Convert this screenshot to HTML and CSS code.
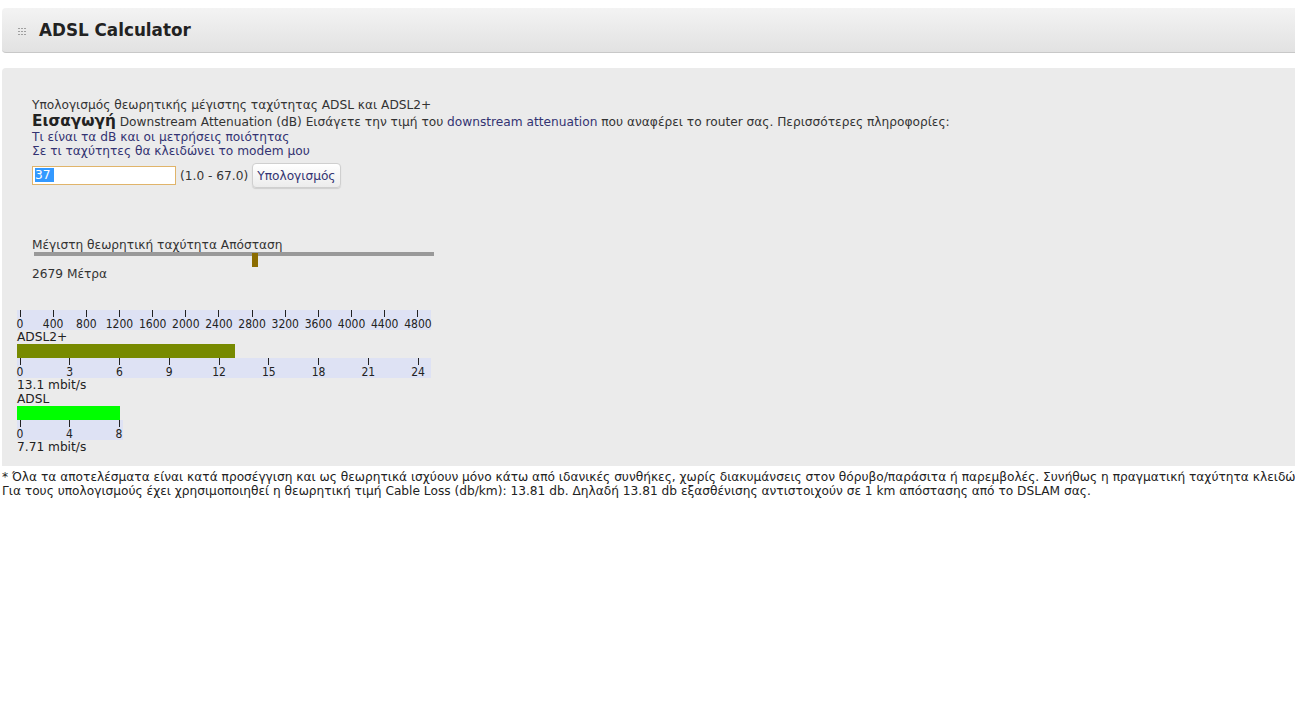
FILE: index.html
```html
<!DOCTYPE html>
<html lang="el">
<head>
    <meta charset="UTF-8">
    <title>ADSL Calculator</title>
    <link rel="stylesheet" href="styles.css">
</head>
<body>
    <div class="header">
        <svg class="header__icon" width="9" height="7" viewBox="0 0 9 7">
            <path d="M0 0.5H9M0 3.5H9M0 6.5H9" stroke="#a0a0a0" stroke-width="1" stroke-dasharray="2 1"/>
        </svg>
        <h1 class="header__title">ADSL Calculator</h1>
    </div>

    <div class="panel">
        <div class="intro">
            <p>Υπολογισμός θεωρητικής μέγιστης ταχύτητας ADSL και ADSL2+</p>
            <p><b class="intro__big">Εισαγωγή</b> Downstream Attenuation (dB) Εισάγετε την τιμή του <a href="#">downstream attenuation</a> που αναφέρει το router σας. Περισσότερες πληροφορίες:</p>
            <p><a href="#">Τι είναι τα dB και οι μετρήσεις ποιότητας</a></p>
            <p><a href="#">Σε τι ταχύτητες θα κλειδώνει το modem μου</a></p>
            <div class="form-row">
                <span class="field"><span class="field__sel">37</span></span>
                <span class="range">(1.0 - 67.0)</span>
                <button class="btn">Υπολογισμός</button>
            </div>
        </div>

        <div class="distance">
            <p>Μέγιστη θεωρητική ταχύτητα Απόσταση</p>
            <div class="slider">
                <span class="slider__thumb" style="left: 218px"></span>
            </div>
            <p class="distance__value">2679 Μέτρα</p>
        </div>

        <div class="charts">
            <div class="scale">
                <div class="scale__ticks">
                    <span class="tick"><i></i>0</span>
                    <span class="tick"><i></i>400</span>
                    <span class="tick"><i></i>800</span>
                    <span class="tick"><i></i>1200</span>
                    <span class="tick"><i></i>1600</span>
                    <span class="tick"><i></i>2000</span>
                    <span class="tick"><i></i>2400</span>
                    <span class="tick"><i></i>2800</span>
                    <span class="tick"><i></i>3200</span>
                    <span class="tick"><i></i>3600</span>
                    <span class="tick"><i></i>4000</span>
                    <span class="tick"><i></i>4400</span>
                    <span class="tick"><i></i>4800</span>
                </div>
            </div>

            <div class="chart__label">ADSL2+</div>
            <div class="bar bar--adsl2" style="width: 218px"></div>
            <div class="scale">
                <div class="scale__ticks">
                    <span class="tick"><i></i>0</span>
                    <span class="tick"><i></i>3</span>
                    <span class="tick"><i></i>6</span>
                    <span class="tick"><i></i>9</span>
                    <span class="tick"><i></i>12</span>
                    <span class="tick"><i></i>15</span>
                    <span class="tick"><i></i>18</span>
                    <span class="tick"><i></i>21</span>
                    <span class="tick"><i></i>24</span>
                </div>
            </div>
            <div class="chart__label">13.1 mbit/s</div>

            <div class="chart__label">ADSL</div>
            <div class="bar bar--adsl" style="width: 103px"></div>
            <div class="scale scale--small">
                <div class="scale__ticks">
                    <span class="tick"><i></i>0</span>
                    <span class="tick"><i></i>4</span>
                    <span class="tick"><i></i>8</span>
                </div>
            </div>
            <div class="chart__label">7.71 mbit/s</div>
        </div>
    </div>

    <div class="footnote">
        <p>* Όλα τα αποτελέσματα είναι κατά προσέγγιση και ως θεωρητικά ισχύουν μόνο κάτω από ιδανικές συνθήκες, χωρίς διακυμάνσεις στον θόρυβο/παράσιτα ή παρεμβολές. Συνήθως η πραγματική ταχύτητα κλειδώνει</p>
        <p>Για τους υπολογισμούς έχει χρησιμοποιηθεί η θεωρητική τιμή Cable Loss (db/km): 13.81 db. Δηλαδή 13.81 db εξασθένισης αντιστοιχούν σε 1 km απόστασης από το DSLAM σας.</p>
    </div>
</body>
</html>
```

FILE: styles.css
```css
* {
    margin: 0;
    padding: 0;
    box-sizing: border-box;
}

body {
    background-color: #ffffff;
    color: #333;
    font-family: "DejaVu Sans", Verdana, sans-serif;
    font-size: 12.2px;
    line-height: 14px;
    overflow-x: hidden;
}

a {
    color: #333372;
    text-decoration: none;
}

.header {
    margin: 8px -10px 0 2px;
    height: 45px;
    display: flex;
    align-items: center;
    padding-left: 16px;
    background: linear-gradient(#f3f3f3, #e2e2e2);
    border-bottom: 1px solid #c8c8c8;
    border-radius: 4px 0 0 4px;
}

.header__icon {
    margin-right: 12px;
    margin-top: 2px;
}

.header__title {
    font-size: 16.8px;
    font-weight: bold;
    color: #222;
}

.panel {
    margin: 15px -10px 0 2px;
    padding: 30px 0 12px 15px;
    background-color: #ebebeb;
    border-radius: 4px 0 0 0;
}

.intro {
    padding-left: 15px;
}

.intro__big {
    font-size: 15.3px;
    color: #222;
    line-height: 18px;
}

.form-row {
    display: flex;
    align-items: center;
    margin-top: 5px;
}

.field {
    width: 144px;
    height: 19px;
    border: 1px solid #e0b46a;
    background-color: #fff;
    padding: 1px 2px;
    line-height: 15px;
}

.field__sel {
    background-color: #3399ff;
    color: #fff;
    padding: 0 3px 0 0;
}

.range {
    margin-left: 4px;
}

.btn {
    margin-left: 4px;
    height: 25px;
    padding: 0 4px;
    font-family: "DejaVu Sans", Verdana, sans-serif;
    font-size: 12.2px;
    color: #333372;
    background: linear-gradient(#ffffff, #ececec);
    border: 1px solid #cfcfcf;
    border-radius: 4px;
    box-shadow: 0 1px 1px rgba(0, 0, 0, 0.12);
}

.distance {
    margin-top: 50px;
    padding-left: 15px;
}

.slider {
    position: relative;
    width: 400px;
    height: 4px;
    margin-left: 2px;
    background-color: #999;
}

.slider__thumb {
    position: absolute;
    top: 1px;
    width: 6px;
    height: 14px;
    background-color: #8b6c00;
}

.distance__value {
    margin-top: 11px;
}

.charts {
    margin-top: 29px;
}

.scale {
    width: 414px;
    height: 20px;
    padding: 0 13px 0 3px;
    background-color: #dee2f4;
    font-family: "DejaVu Sans Condensed", "Liberation Sans", sans-serif;
    font-size: 12px;
}

.scale--small {
    width: 106px;
    padding-right: 4px;
}

.scale__ticks {
    display: flex;
    justify-content: space-between;
    height: 100%;
}

.tick {
    width: 0;
    display: flex;
    flex-direction: column;
    align-items: center;
    line-height: 12px;
    color: #222;
}

.tick i {
    display: block;
    width: 1px;
    height: 8px;
    background-color: #222;
    margin-bottom: 1px;
}

.chart__label {
    line-height: 13px;
    color: #222;
    margin-top: 1px;
}

.bar {
    height: 14px;
}

.bar--adsl2 {
    background-color: #778a00;
}

.bar--adsl {
    background-color: #00ff00;
}

.footnote {
    margin: 4px 0 0 2px;
    white-space: nowrap;
    color: #222;
}
```
